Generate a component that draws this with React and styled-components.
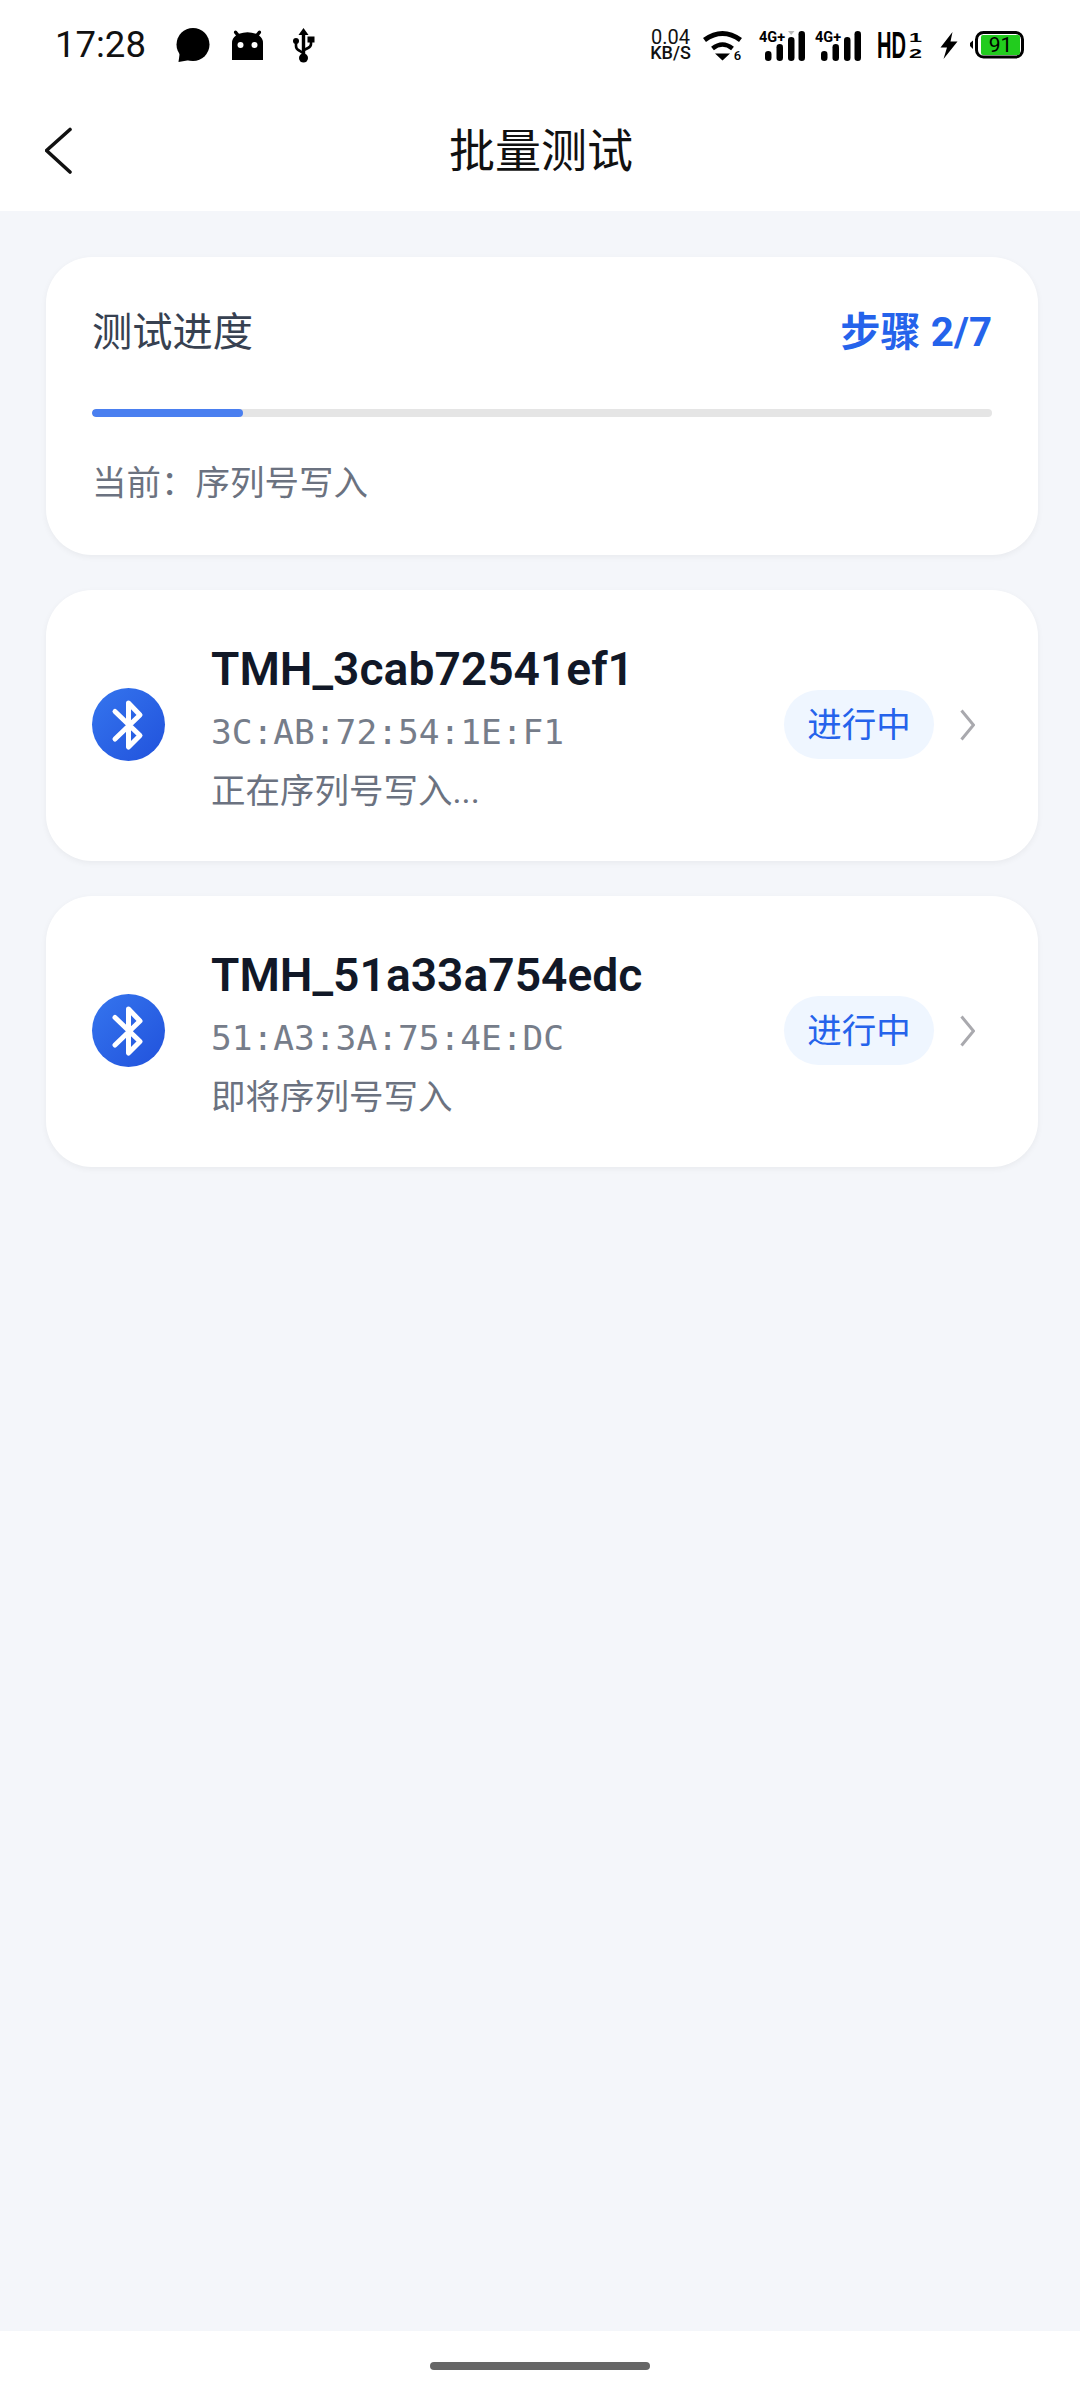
import React from "react";
import styled, { createGlobalStyle } from "styled-components";

const CJK = `Roboto, "Noto Sans CJK SC", sans-serif`;

const GlobalStyle = createGlobalStyle`
  html, body {
    margin: 0;
    padding: 0;
    background: #f4f6fa;
  }
  * {
    box-sizing: border-box;
  }
`;

const Page = styled.div`
  width: 1080px;
  height: 2400px;
  display: flex;
  flex-direction: column;
  font-family: ${CJK};
  overflow: hidden;
`;

const Header = styled.header`
  background: #fff;
  height: 211px;
  flex: none;
`;

const StatusBar = styled.div`
  height: 90px;
  padding: 0 56px 0 55px;
  display: flex;
  align-items: center;
  justify-content: space-between;
`;

const StatusGroup = styled.div`
  display: flex;
  align-items: center;
`;

const Clock = styled.span`
  font-size: 36.5px;
  line-height: 36px;
  color: #111;
  width: 91px;
`;

const StatusIcon = styled.svg`
  display: block;
  flex: none;
  overflow: visible;
  margin-left: ${({ $gap }) => $gap || 0}px;
`;

const Speed = styled.div`
  width: 41px;
  display: flex;
  flex-direction: column;
  align-items: center;
  color: #111;
  white-space: nowrap;
  & span {
    display: block;
    font-size: 20px;
    line-height: 15px;
  }
  & strong {
    display: block;
    font-size: 18px;
    line-height: 15px;
    font-weight: 500;
  }
`;

const NavBar = styled.div`
  height: 121px;
  padding: 0 43px 0 45px;
  display: grid;
  grid-template-columns: 1fr auto 1fr;
  align-items: center;
`;

const Title = styled.h1`
  margin: 0;
  font-size: 46px;
  line-height: 60px;
  font-weight: 400;
  color: #111;
`;

const Main = styled.main`
  flex: 1;
  padding: 46px 42px 0 46px;
  display: flex;
  flex-direction: column;
  gap: 35px;
`;

const Card = styled.section`
  background: #fff;
  border-radius: 46px;
  box-shadow: 0 2px 6px rgba(0, 0, 0, 0.05);
`;

const ProgressCard = styled(Card)`
  padding: 46px;
`;

const ProgressHead = styled.div`
  display: flex;
  justify-content: space-between;
  align-items: center;
  height: 50px;
`;

const ProgressLabel = styled.span`
  font-size: 40.25px;
  color: #374151;
`;

const StepLabel = styled.span`
  font-size: 40.25px;
  font-weight: 700;
  color: #2563eb;
`;

const Track = styled.div`
  height: 8px;
  margin: 56px 0 40px;
  background: #e5e5e5;
  border-radius: 4px;
  overflow: hidden;
`;

const Fill = styled.div`
  height: 100%;
  width: ${({ $value }) => $value}%;
  background: #4a7ff0;
  border-radius: 4px;
`;

const CurrentStep = styled.div`
  font-size: 34.5px;
  line-height: 52px;
  color: #6b7280;
`;

const DeviceCard = styled(Card)`
  padding: 46px 63px 48px 46px;
  display: flex;
  align-items: center;
`;

const DeviceIcon = styled.div`
  width: 73px;
  height: 73px;
  flex: none;
  border-radius: 50%;
  background: linear-gradient(135deg, #3575ee, #2152dc);
`;

const DeviceInfo = styled.div`
  flex: 1;
  margin-left: 46px;
  display: flex;
  flex-direction: column;
`;

const DeviceName = styled.div`
  font-size: 46.2px;
  line-height: 66px;
  font-weight: 600;
  color: #111827;
`;

const DeviceMac = styled.div`
  margin-top: 10px;
  font-family: "DejaVu Sans Mono", monospace;
  font-size: 34.5px;
  line-height: 40px;
  color: #767d8a;
`;

const DeviceStatus = styled.div`
  margin-top: 17px;
  font-size: 34.5px;
  line-height: 44px;
  color: #6b7280;
`;

const Badge = styled.span`
  width: 150px;
  height: 69px;
  flex: none;
  padding-bottom: 5px;
  border-radius: 35px;
  background: #eff6ff;
  color: #2563eb;
  font-size: 34.5px;
  display: flex;
  align-items: center;
  justify-content: center;
`;

const Arrow = styled.svg`
  display: block;
  flex: none;
  margin-left: 26px;
`;

const HomeBar = styled.div`
  height: 69px;
  flex: none;
  background: #fff;
  display: flex;
  align-items: center;
  justify-content: center;
`;

const HomePill = styled.div`
  width: 220px;
  height: 8px;
  border-radius: 4px;
  background: #666;
`;

const devices = [
  { name: "TMH_3cab72541ef1", mac: "3C:AB:72:54:1E:F1", status: "正在序列号写入..." },
  { name: "TMH_51a33a754edc", mac: "51:A3:3A:75:4E:DC", status: "即将序列号写入" },
];

const BubbleIcon = ({ gap }) => (
  <StatusIcon $gap={gap} width="34" height="36" viewBox="0 0 34 36">
    <circle cx="17" cy="17.5" r="16.5" fill="#000" />
    <path d="M4 24 L2.5 35 L14 33 Z" fill="#000" />
  </StatusIcon>
);

const AndroidIcon = ({ gap }) => (
  <StatusIcon $gap={gap} width="31" height="30" viewBox="0 0 31 30">
    <path
      d="M0 30 V13 Q0 8 4 5.5 L2 3 Q1.5 0.5 3.5 0.5 Q5 0.5 5.5 2 L7 3.8 Q15.5 0.8 24 3.8 L25.5 2 Q26 0.5 27.5 0.5 Q29.5 0.5 29 3 L27 5.5 Q31 8 31 13 V30 Z"
      fill="#000"
    />
    <circle cx="8.5" cy="15" r="3" fill="#fff" />
    <circle cx="22.5" cy="15" r="3" fill="#fff" />
  </StatusIcon>
);

const UsbIcon = ({ gap }) => (
  <StatusIcon $gap={gap} width="22" height="35" viewBox="0 0 22 35">
    <path d="M10.5 0 L5.5 7 H15.5 Z" fill="#000" />
    <path d="M10.5 5 V30" stroke="#000" strokeWidth="3.4" />
    <circle cx="10.5" cy="30" r="4.5" fill="#000" />
    <circle cx="3" cy="13" r="3" fill="#000" />
    <rect x="14.5" y="8.5" width="7" height="6" fill="#000" />
    <path d="M3 14 V18 Q3 21 6 22.5 L10 25" stroke="#000" strokeWidth="2.6" fill="none" />
    <path d="M18 14 V16 Q18 18.5 15 20 L11 22" stroke="#000" strokeWidth="2.6" fill="none" />
  </StatusIcon>
);

const WifiIcon = ({ gap }) => (
  <StatusIcon $gap={gap} width="40" height="31" viewBox="0 0 40 31">
    <path d="M1.5 10 Q19.5 -3 37.5 10" stroke="#000" strokeWidth="5" fill="none" />
    <path d="M9.5 18.5 Q19.5 10.5 29.5 18.5" stroke="#000" strokeWidth="4.5" fill="none" />
    <path d="M12 23.5 H27 L19.5 30.5 Z" fill="#000" />
    <text x="34.5" y="30" fontFamily="Roboto, sans-serif" fontSize="13" fontWeight="500" textAnchor="middle" fill="#000">
      6
    </text>
  </StatusIcon>
);

const SignalIcon = ({ gap, roaming }) => (
  <StatusIcon $gap={gap} width="46" height="31" viewBox="0 0 46 31">
    <text x="0" y="12" fontFamily="Roboto, sans-serif" fontSize="14.5" fontWeight="700" fill="#000">
      4G+
    </text>
    <rect x="6" y="21" width="6.5" height="10" rx="3.2" fill="#000" />
    <rect x="17.5" y="14" width="6.5" height="17" rx="3.2" fill="#000" />
    <rect x="29" y="7" width="6.5" height="24" rx="3.2" fill="#000" />
    <rect x="39.5" y="1" width="6.5" height="30" rx="3.2" fill="#000" />
    {roaming && <path d="M29 1 H35.5 L32.2 5 Z" fill="#bbb" />}
  </StatusIcon>
);

const HdIcon = ({ gap }) => (
  <StatusIcon $gap={gap} width="45" height="28" viewBox="0 0 45 28">
    <text x="0" y="27" fontFamily="Liberation Sans, sans-serif" fontSize="36" fontWeight="700" fill="#000" textLength="29" lengthAdjust="spacingAndGlyphs">
      HD
    </text>
    <text x="32" y="11" fontFamily="Liberation Sans, sans-serif" fontSize="13" fontWeight="700" fill="#000" textLength="13" lengthAdjust="spacingAndGlyphs">
      1
    </text>
    <text x="32" y="27" fontFamily="Liberation Sans, sans-serif" fontSize="13" fontWeight="700" fill="#000" textLength="13" lengthAdjust="spacingAndGlyphs">
      2
    </text>
  </StatusIcon>
);

const BoltIcon = ({ gap }) => (
  <StatusIcon $gap={gap} width="18" height="27" viewBox="0 0 18 27">
    <path d="M12.5 0 L0.5 15.5 H7 L3.5 27 L17.5 9.5 H10.5 Z" fill="#000" />
  </StatusIcon>
);

const BatteryIcon = ({ gap }) => (
  <StatusIcon $gap={gap} width="55" height="28" viewBox="0 0 55 28">
    <path d="M4 9.5 L1 12 V15 L4 18 Z" fill="#000" />
    <rect x="7.5" y="1.5" width="46" height="24.5" rx="7" fill="#fff" stroke="#000" strokeWidth="3" />
    <rect x="12" y="4" width="39" height="20" rx="2" fill="#22cc1e" />
    <text x="31.5" y="21" fontFamily="Roboto, sans-serif" fontSize="21" textAnchor="middle" fill="#000">
      91
    </text>
  </StatusIcon>
);

const BackIcon = () => (
  <svg width="28" height="47" viewBox="0 0 28 47" style={{ display: "block" }}>
    <path d="M25 2.5 L1.5 23.5 L25 45" stroke="#111" strokeWidth="3.6" strokeLinecap="round" strokeLinejoin="round" fill="none" />
  </svg>
);

const BluetoothIcon = () => (
  <svg width="73" height="73" viewBox="0 0 73 73" style={{ display: "block" }}>
    <path
      d="M23 23.5 L48 47.5 L36.5 59 V15 L48 27 L23 51"
      stroke="#fff"
      strokeWidth="5"
      strokeLinecap="round"
      strokeLinejoin="round"
      fill="none"
    />
  </svg>
);

const App = () => (
  <Page>
    <GlobalStyle />
    <Header>
      <StatusBar>
        <StatusGroup>
          <Clock>17:28</Clock>
          <BubbleIcon gap={30} />
          <AndroidIcon gap={22} />
          <UsbIcon gap={30} />
        </StatusGroup>
        <StatusGroup>
          <Speed>
            <span>0.04</span>
            <strong>KB/S</strong>
          </Speed>
          <WifiIcon gap={12} />
          <SignalIcon gap={16} roaming />
          <SignalIcon gap={10} />
          <HdIcon gap={16} />
          <BoltIcon gap={18} />
          <BatteryIcon gap={11} />
        </StatusGroup>
      </StatusBar>
      <NavBar>
        <BackIcon />
        <Title>批量测试</Title>
      </NavBar>
    </Header>

    <Main>
      <ProgressCard>
        <ProgressHead>
          <ProgressLabel>测试进度</ProgressLabel>
          <StepLabel>步骤 2/7</StepLabel>
        </ProgressHead>
        <Track>
          <Fill $value={16.8} />
        </Track>
        <CurrentStep>当前：序列号写入</CurrentStep>
      </ProgressCard>

      {devices.map((device) => (
        <DeviceCard key={device.mac}>
          <DeviceIcon>
            <BluetoothIcon />
          </DeviceIcon>
          <DeviceInfo>
            <DeviceName>{device.name}</DeviceName>
            <DeviceMac>{device.mac}</DeviceMac>
            <DeviceStatus>{device.status}</DeviceStatus>
          </DeviceInfo>
          <Badge>进行中</Badge>
          <Arrow width="15" height="32" viewBox="0 0 15 32">
            <path d="M1.5 1.5 L13.5 16 L1.5 30.5" stroke="#a9a9ae" strokeWidth="3" fill="none" />
          </Arrow>
        </DeviceCard>
      ))}
    </Main>

    <HomeBar>
      <HomePill />
    </HomeBar>
  </Page>
);

export default App;
